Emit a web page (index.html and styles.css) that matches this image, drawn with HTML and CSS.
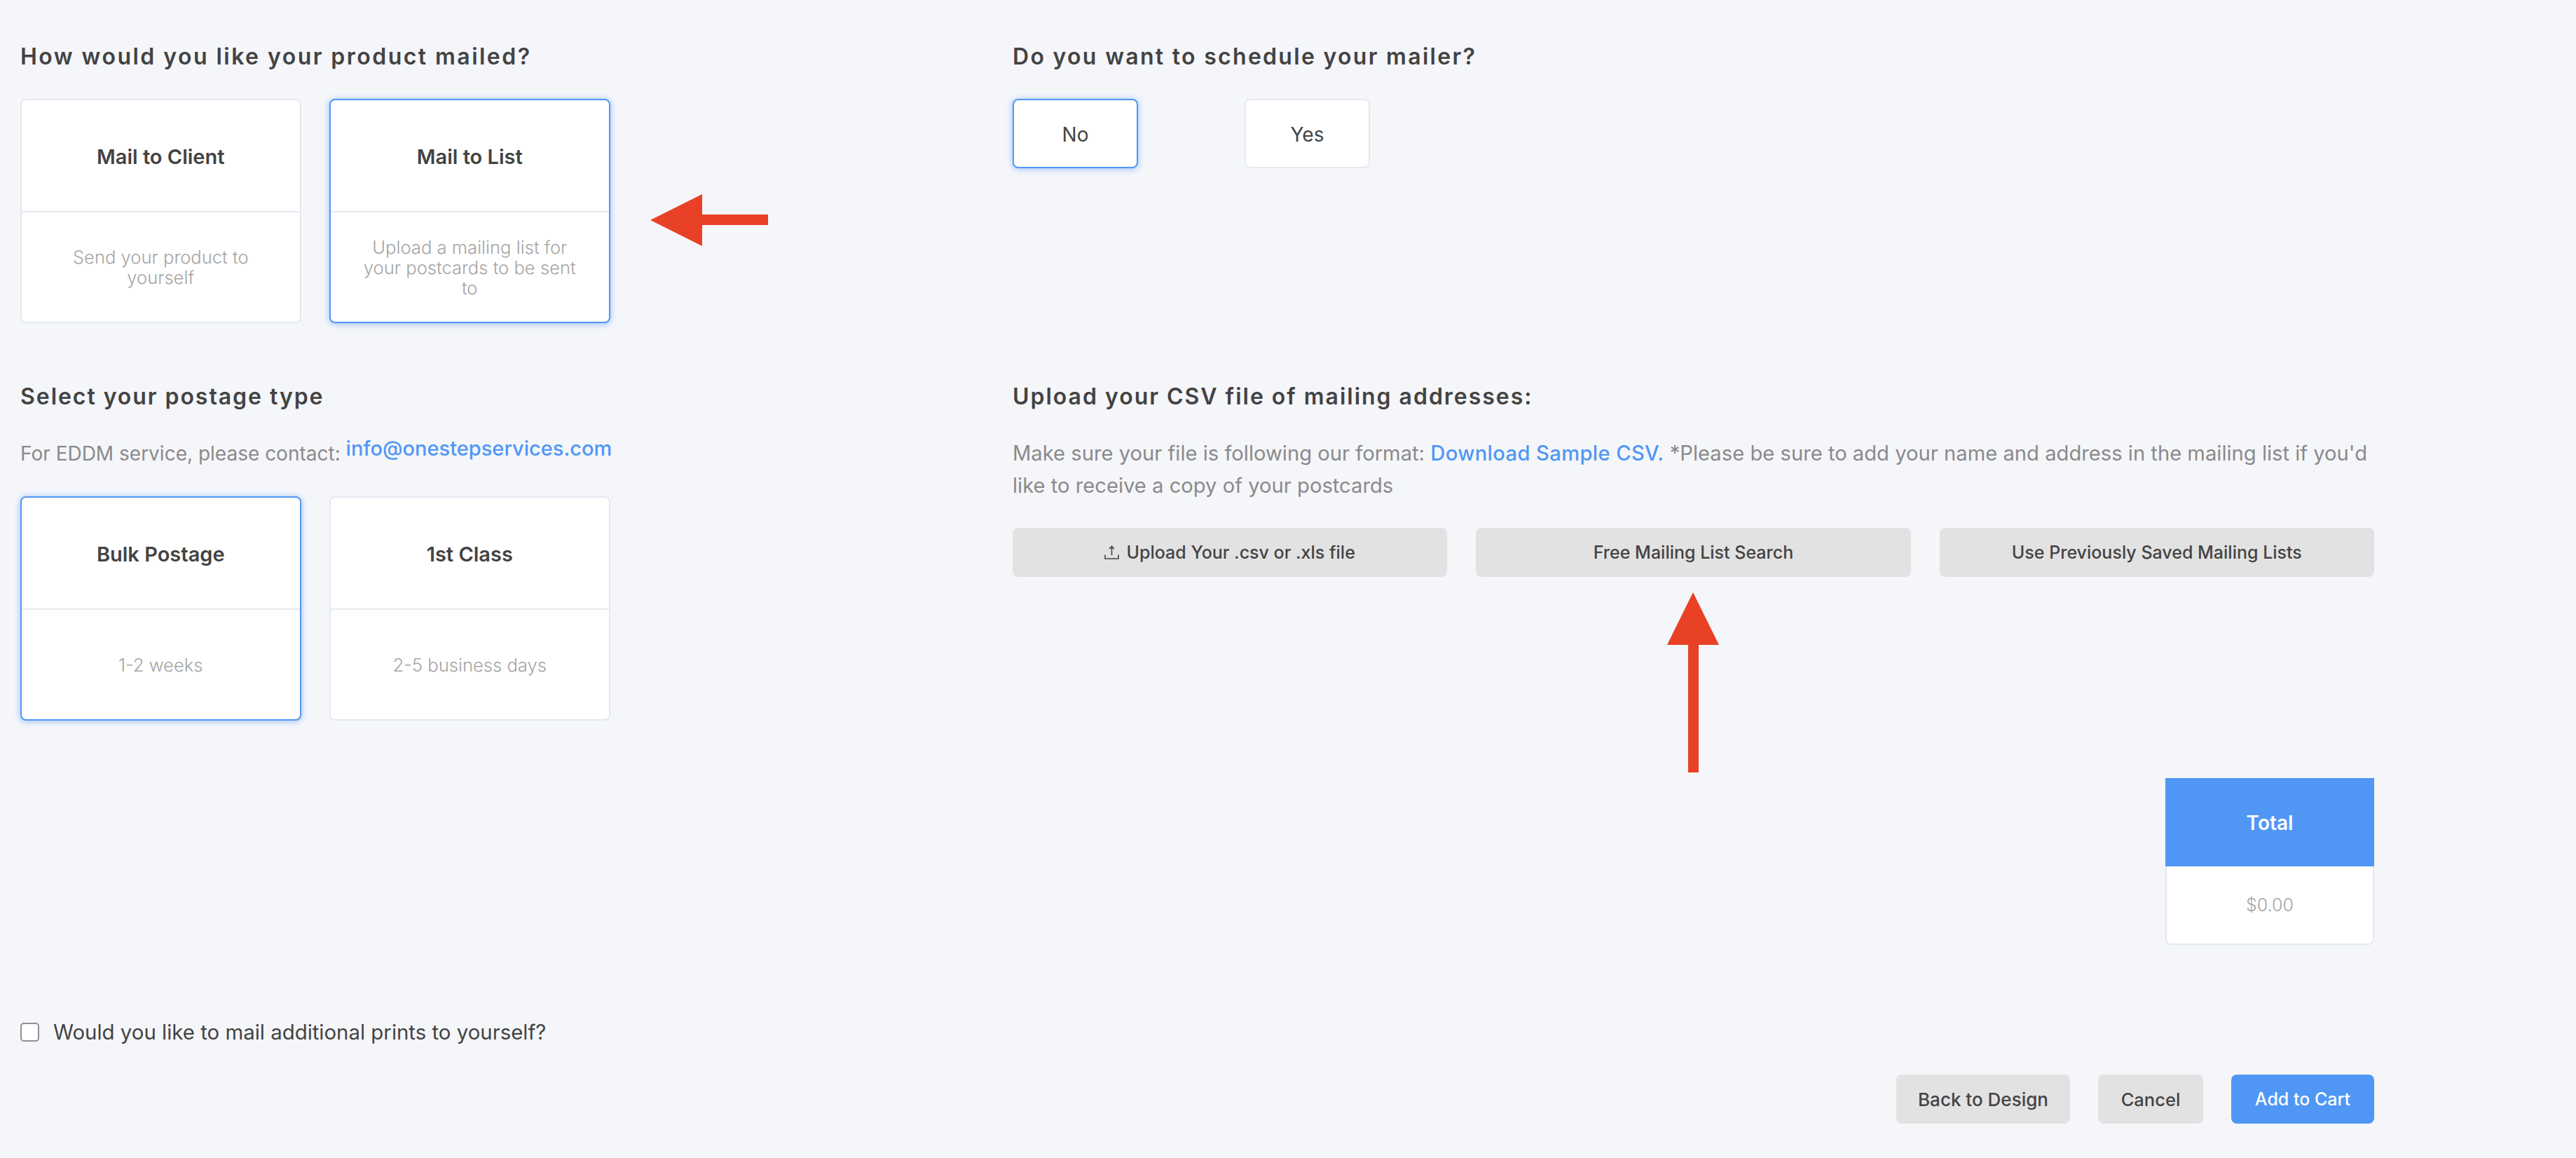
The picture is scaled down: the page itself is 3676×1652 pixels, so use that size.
FILE: index.html
```html
<!DOCTYPE html>
<html lang="en">
<head>
<meta charset="utf-8">
<title>Mailing options</title>
<link rel="stylesheet" href="styles.css">
</head>
<body>
<main class="page">
  <div class="grid">
    <section class="cell">
      <h2 class="heading heading-mailed">How would you like your product mailed?</h2>
      <div class="tiles">
        <div class="tile">
          <div class="tile-head">Mail to Client</div>
          <div class="tile-body">Send your product to yourself</div>
        </div>
        <div class="tile selected">
          <div class="tile-head">Mail to List</div>
          <div class="tile-body">Upload a mailing list for your postcards to be sent to</div>
        </div>
      </div>
      <svg class="arrow arrow-left" width="168" height="74" viewBox="0 0 168 74"><polygon points="0,37 74,0 74,29 168,29 168,44 74,44 74,74" fill="#e94125"/></svg>
    </section>
    <section class="cell">
      <h2 class="heading heading-schedule">Do you want to schedule your mailer?</h2>
      <div class="choices">
        <div class="choice selected">No</div>
        <div class="choice">Yes</div>
      </div>
    </section>
    <section class="cell">
      <h2 class="heading heading-postage">Select your postage type</h2>
      <p class="note note-eddm">For EDDM service, please contact: <a class="link email" href="#">info@onestepservices.com</a></p>
      <div class="tiles">
        <div class="tile selected">
          <div class="tile-head">Bulk Postage</div>
          <div class="tile-body">1-2 weeks</div>
        </div>
        <div class="tile">
          <div class="tile-head">1st Class</div>
          <div class="tile-body">2-5 business days</div>
        </div>
      </div>
    </section>
    <section class="cell">
      <h2 class="heading heading-csv">Upload your CSV file of mailing addresses:</h2>
      <p class="note note-csv">Make sure your file is following our format: <a class="link link-csv" href="#">Download Sample CSV.</a> *Please be sure to add your name and address in the mailing list if you'd like to receive a copy of your postcards</p>
      <div class="uploads">
        <button class="btn upload-btn" type="button"><svg class="upload-icon" width="21" height="20" viewBox="0 0 21 20" fill="none" stroke="#444" stroke-width="1.6"><path d="M10.5 14V1.5M7 5l3.5-3.5L14 5M1 13.5v5.5h19v-5.5"/></svg>Upload Your .csv or .xls file</button>
        <button class="btn upload-btn" type="button">Free Mailing List Search</button>
        <button class="btn upload-btn" type="button">Use Previously Saved Mailing Lists</button>
      </div>
      <svg class="arrow arrow-up" width="74" height="257" viewBox="0 0 74 257"><polygon points="37,0 74,75 45,75 45,257 30,257 30,75 0,75" fill="#e94125"/></svg>
      <div class="total">
        <div class="total-head">Total</div>
        <div class="total-body">$0.00</div>
      </div>
    </section>
  </div>
  <label class="optin"><input class="check" type="checkbox"><span>Would you like to mail additional prints to yourself?</span></label>
  <div class="actions">
    <button class="btn action back" type="button">Back to Design</button>
    <button class="btn action cancel" type="button">Cancel</button>
    <button class="btn action primary" type="button">Add to Cart</button>
  </div>
</main>
</body>
</html>
```
FILE: styles.css
```css
* { box-sizing: border-box; }
html, body { margin: 0; height: 100%; background: #f5f6fa; }
body { font-family: Inter, "Noto Sans", sans-serif; color: #434343; overflow: hidden; }
.page { width: 3388px; padding: 60px 0 0 29px; }
.grid { display: grid; grid-template-columns: 1416px 1943px; row-gap: 84px; }
.cell { position: relative; }
.heading { margin: 0 0 41px; padding-top: 1px; height: 40px; font-size: 32px; line-height: 40px; font-weight: 600; color: #434343; }
.heading-mailed { letter-spacing: 2.46px; }
.heading-schedule { letter-spacing: 2.3px; }
.heading-postage { letter-spacing: 1.95px; }
.heading-csv { letter-spacing: 1.98px; }
.tiles { display: flex; gap: 40.5px; }
.tile { width: 400.5px; height: 320px; background: #fff; border: 2px solid #e4e9f0; border-radius: 8px; display: flex; flex-direction: column; }
.selected { border-color: #5097f5; box-shadow: 0 1px 10px rgba(80,151,245,.6); }
.tile-head { height: 160px; flex: none; padding-top: 2px; display: flex; align-items: center; justify-content: center; border-bottom: 2px solid #e4e9f0; font-size: 29px; font-weight: 600; color: #434343; }
.tile-body { flex: 1; display: flex; align-items: center; justify-content: center; text-align: center; padding: 0 40px; font-size: 25.6px; line-height: 29px; font-weight: 300; color: #a5a5a5; }
.choices { display: flex; gap: 152px; }
.choice { width: 179px; height: 99px; padding-top: 2px; background: #fff; border: 2px solid #e4e9f0; border-radius: 8px; display: flex; align-items: center; justify-content: center; font-size: 28px; font-weight: 400; color: #434343; }
.choice.selected { border-color: #5097f5; }
.note { margin: -2px 0 0; line-height: 46px; font-weight: 400; color: #8a8a8a; }
.note-eddm { margin-bottom: 38px; font-size: 28px; }
.note-csv { margin-bottom: 37px; font-size: 29.2px; }
.link { color: #5097f5; text-decoration: none; font-weight: 500; }
.link-csv { letter-spacing: 0.35px; }
.email { font-size: 29px; position: relative; top: -7px; }
.uploads { display: grid; grid-template-columns: repeat(3, 1fr); gap: 41px; }
.btn { border: 0; background: #e2e2e2; border-radius: 8px; font-family: inherit; color: #434343; font-weight: 500; font-size: 25px; display: flex; align-items: center; justify-content: center; }
.upload-btn { height: 70px; }
.upload-icon { margin-right: 10px; }
.total { width: 298px; height: 238px; margin: 287px 0 0 auto; background: #fff; border: 2px solid #e4e9f0; border-top: 0; border-radius: 0 0 8px 8px; display: flex; flex-direction: column; }
.total-head { height: 126px; flex: none; padding-top: 2px; margin: 0 -2px; background: #5097f5; color: #fff; display: flex; align-items: center; justify-content: center; font-size: 28px; font-weight: 600; }
.total-body { flex: 1; display: flex; align-items: center; justify-content: center; font-size: 25px; font-weight: 300; color: #a5a5a5; }
.optin { display: flex; align-items: center; gap: 20px; margin-top: 104px; height: 40px; font-size: 29.4px; font-weight: 400; color: #434343; }
.check { appearance: none; margin: 0; width: 27px; height: 27px; background: #fff; border: 2px solid #8f8f8f; border-radius: 5px; }
.actions { display: flex; justify-content: flex-end; gap: 40px; margin-top: 41px; }
.action { height: 70px; }
.back { width: 248px; font-size: 26px; }
.cancel { width: 150px; font-size: 25.5px; }
.primary { width: 204px; background: #5097f5; color: #fff; }
.arrow { position: absolute; display: block; }
.arrow-left { left: 899px; top: 217px; }
.arrow-up { left: 934px; top: 300px; }
```
